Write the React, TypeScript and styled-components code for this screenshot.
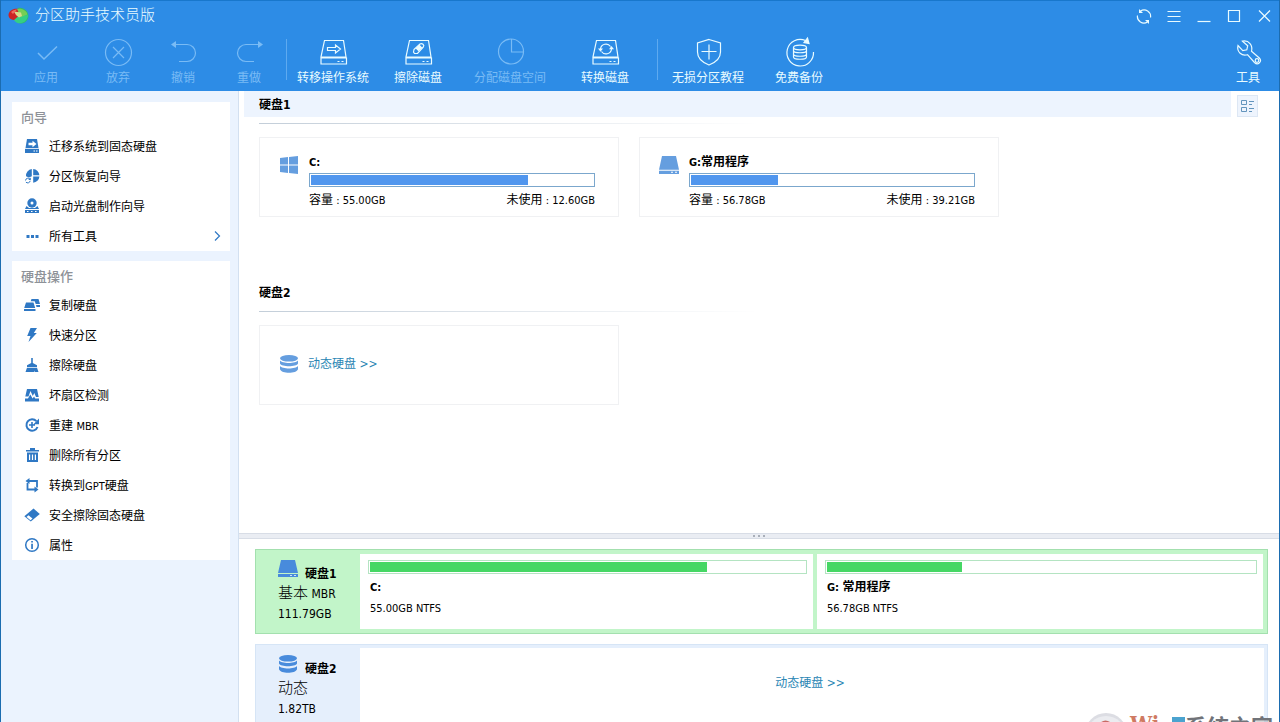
import React from "react";
import styled, { createGlobalStyle } from "styled-components";

const GlobalStyle = createGlobalStyle`
  *, *::before, *::after { box-sizing: border-box; }
  body {
    margin: 0;
    overflow: hidden;
    font-family: "DejaVu Sans Condensed", "Noto Sans CJK SC", sans-serif;
    font-size: 12px;
    line-height: 20px;
    color: #000;
    background: #fff;
  }
  button { font: inherit; color: inherit; background: none; border: 0; padding: 0; margin: 0; }
  a { text-decoration: none; }
  svg { display: block; flex: none; }
  h1, h2, h3, p, ul { margin: 0; padding: 0; font-size: inherit; }
`;

const Window = styled.div`
  position: relative;
  height: 100vh;
  display: flex;
  flex-direction: column;
  overflow: hidden;
  border: solid #1b6cb0;
  border-width: 0 1px;
`;

const Header = styled.header`
  flex: none;
  height: 91px;
  background: #2d8ce6;
  color: #e9fbff;
  border-top: 1px solid #1877cc;
`;

const TitleBar = styled.div`
  display: flex;
  align-items: center;
  height: 30px;
  padding-left: 7px;
`;

const AppTitle = styled.h1`
  flex: 1;
  margin-left: 6px;
  font-size: 15px;
  font-weight: 300;
  line-height: 18px;
  padding-bottom: 2px;
`;

const WindowButton = styled.button`
  display: flex;
  width: 30px;
  height: 30px;
  align-items: center;
  justify-content: center;
`;

const Toolbar = styled.nav`
  display: flex;
  height: 60px;
  padding-left: 9px;
`;

const ToolButton = styled.button<{ $width: number }>`
  display: flex;
  flex-direction: column;
  align-items: center;
  flex: none;
  width: ${(p) => p.$width}px;
  padding-top: 5px;
  white-space: nowrap;
  &:disabled { color: #79bbf5; }
`;

const Separator = styled.div<{ $gap?: number }>`
  width: 1px;
  height: 41px;
  margin-top: 8px;
  margin-left: ${(p) => p.$gap ?? 0}px;
  background: #5eaaf0;
`;

const Spacer = styled.div`
  flex: 1;
`;

const Body = styled.div`
  flex: 1;
  min-height: 0;
  display: flex;
`;

const Sidebar = styled.aside`
  flex: none;
  width: 238px;
  padding: 11px 8px 0 11px;
  display: flex;
  flex-direction: column;
  gap: 10px;
  background: #ebf3fe;
  border-right: 1px solid #d3e0f0;
`;

const MenuCard = styled.section`
  background: #fff;
`;

const MenuHeading = styled.h2`
  height: 29px;
  padding: 1px 0 0 9px;
  font-size: 13px;
  font-weight: 500;
  line-height: 29px;
  color: #8e9298;
`;

const MenuList = styled.ul`
  list-style: none;
`;

const MenuItem = styled.button`
  display: flex;
  align-items: center;
  width: 100%;
  height: 30px;
  padding: 0 8px 0 12px;
  text-align: left;
  svg { color: #2f78c4; }
`;

const MenuLabel = styled.span`
  flex: 1;
  margin-left: 9px;
  padding-top: 2px;
`;

const Latin = styled.span`
  font-size: 11px;
`;

const Main = styled.main`
  flex: 1;
  min-width: 0;
  display: flex;
  flex-direction: column;
`;

const VolumePane = styled.div`
  flex: 1;
  min-height: 0;
  display: flex;
  flex-direction: column;
  gap: 62px;
  overflow: hidden;
`;

const Group = styled.section`
  flex: none;
`;

const GroupTop = styled.div`
  display: flex;
  padding-left: 5px;
`;

const GroupTitle = styled.h2<{ $selected?: boolean }>`
  flex: 1;
  height: 26px;
  padding: 1px 0 0 15px;
  font-weight: bold;
  line-height: 26px;
  background: ${(p) => (p.$selected ? "#edf4fe" : "transparent")};
`;

const ViewButton = styled.button`
  display: flex;
  align-items: center;
  justify-content: center;
  width: 21px;
  height: 22px;
  margin: 4px 21px 0 6px;
  background: #eef4fd;
  border: 1px solid #dde7f4;
`;

const Rule = styled.div`
  height: 1px;
  margin: 6px 20px 13px;
  background: linear-gradient(90deg, #c3ced9, #fff 50%);
`;

const Cards = styled.div`
  display: flex;
  gap: 20px;
  padding: 0 20px;
`;

const VolumeCard = styled.article`
  display: flex;
  flex: 0 1 360px;
  height: 80px;
  padding: 14px 23px 0 19px;
  border: 1px solid #f0f1f3;
`;

const VolumeIcon = styled.div`
  width: 30px;
  padding-top: 4px;
`;

const VolumeInfo = styled.div`
  flex: 1;
`;

const VolumeName = styled.h3`
  font-weight: bold;
`;

const Meter = styled.div<{ $tone: "blue" | "green" }>`
  height: 14px;
  padding: 1px;
  background: #fff;
  border: 1px solid ${(p) => (p.$tone === "blue" ? "#7ba7cd" : "#b4e4c2")};
`;

const Fill = styled.div<{ $tone: "blue" | "green" }>`
  height: 100%;
  background: ${(p) => (p.$tone === "blue" ? "#5096ee" : "#45d764")};
`;

const Amounts = styled.div`
  display: flex;
  justify-content: space-between;
  padding-top: 3px;
`;

const DynamicLink = styled.a`
  color: #2a86b4;
`;

const DynamicCard = styled(VolumeCard)`
  align-items: center;
  gap: 9px;
  padding: 0 19px 3px;
`;

const Splitter = styled.div`
  display: flex;
  flex: none;
  align-items: center;
  justify-content: center;
  gap: 3px;
  height: 6px;
  background: #eaedf3;
  border: solid #d8dde6;
  border-width: 1px 0;
`;

const Dot = styled.i`
  width: 2px;
  height: 2px;
  background: #a9afb9;
`;

const DiskPane = styled.div`
  flex: none;
  display: flex;
  flex-direction: column;
  gap: 10px;
  height: 183px;
  padding: 10px 11px 0 16px;
  overflow: hidden;
`;

const DiskRow = styled.section<{ $selected?: boolean }>`
  display: flex;
  flex: none;
  height: 85px;
  border: 1px solid ${(p) => (p.$selected ? "#a3e0ae" : "#d6e5f6")};
  background: ${(p) => (p.$selected ? "#c2f5c9" : "#e5effc")};
`;

const DiskSummary = styled.div`
  width: 104px;
  padding: 13px 0 0 22px;
`;

const DiskTitle = styled.h3`
  display: flex;
  gap: 7px;
  height: 20px;
  font-weight: bold;
  line-height: 22px;
  svg { margin-top: -3px; }
`;

const Kind = styled.span`
  font-size: 15px;
  font-weight: 300;
`;

const Partitions = styled.div<{ $inset: number }>`
  flex: 1;
  display: flex;
  gap: 4px;
  padding: ${(p) => p.$inset}px ${(p) => p.$inset}px ${(p) => p.$inset}px 0;
`;

const Partition = styled.div<{ $share: number }>`
  flex: ${(p) => p.$share} 1 0;
  padding: 6px 6px 0 8px;
  background: #fff;
`;

const PartitionText = styled.div`
  padding: 3px 0 0 2px;
`;

const PartitionSize = styled.p`
  font-size: 11px;
  line-height: 22px;
`;

const DynamicPartition = styled.div`
  flex: 1;
  display: flex;
  align-items: center;
  justify-content: center;
  padding: 0 4px 8px 0;
  background: #fff;
`;

const Watermark = styled.div`
  position: absolute;
  right: 4px;
  bottom: 0;
  width: 190px;
  height: 10px;
  display: flex;
  align-items: flex-start;
  overflow: hidden;
  color: #707379;
`;

const WatermarkLetters = styled.span`
  width: 42px;
  margin-left: 3px;
  font: bold 22px/24px "DejaVu Serif Condensed", "DejaVu Serif", serif;
  color: #cf7a62;
`;

const WatermarkName = styled.span`
  font: bold 22px/26px "Noto Sans CJK SC", sans-serif;
`;

const Blue = styled.div`
  flex: none;
  width: 13px;
  height: 20px;
  margin-top: 5px;
  background: #4ba3cf;
`;

/* ---------- icons ---------- */

const Line = ({ children, size = 32 }: { children: React.ReactNode; size?: number }) => (
  <svg width={size} height={size} viewBox={`0 0 ${size} ${size}`} fill="none" stroke="currentColor" strokeWidth="1.2">
    {children}
  </svg>
);

const Drive = ({ children }: { children: React.ReactNode }) => (
  <Line>
    <path d="M7.500 4.500h19l2.500 16.500h-25zM4 22h25.500v6H4zM20.500 25.500h2M24.500 25.500h2" />
    {children}
  </Line>
);

const toolIcons: Record<string, React.ReactNode> = {
  apply: <Line><path d="M8 17l6 6L27 10.500" strokeWidth="1.500" /></Line>,
  discard: <Line><circle cx="16.500" cy="16.500" r="13" /><path d="M11 11l11 11M22 11l-11 11" /></Line>,
  undo: <Line><path d="M7 8.500h13a8.500 8.500 0 0 1 0 17h-8" /><path d="M4 8.500l5-3.500v7z" fill="currentColor" stroke="none" /></Line>,
  redo: <Line><path d="M26 8.500H13a8.500 8.500 0 0 0 0 17h8" /><path d="M30 8.500l-5-3.500v7z" fill="currentColor" stroke="none" /></Line>,
  migrate: <Drive><path d="M10.500 11.500h8V9l5 4-5 4v-2.500h-8z" /></Drive>,
  wipe: (
    <Drive>
      <path d="M12 13.500l6-5.500q1.500-1 3 .2 1.500 1.300.3 2.800L15.500 17.500h-3L11.500 16z" />
      <path d="M14.500 12.500l3-2.800 2 2-3 2.800z" fill="currentColor" />
    </Drive>
  ),
  allocate: <Line><circle cx="17" cy="15.500" r="12.500" /><path d="M17.500 3v13H29.500" /></Line>,
  convert: (
    <Drive>
      <path d="M11.500 13a5.500 5.500 0 0 1 10-2.500M22.500 13a5.500 5.500 0 0 1-10 2.500" />
      <path d="M9 12.500h5l-2.500 3.200zM20 13.300h5l-2.500-3.200z" fill="currentColor" stroke="none" />
    </Drive>
  ),
  shield: <Line><path d="M17 3.500l11.500 3.500v9c0 6-5 10.500-11.500 13C10.500 26.500 5.500 22 5.500 16V7zM9.500 15.500h15M17 8.500v15" /></Line>,
  backup: (
    <Line>
      <path d="M22.500 4.500A13.300 13.300 0 1 0 30.500 16" />
      <path d="M21 6.500l3.500-4.500 1.500 5.500z" fill="currentColor" />
      <ellipse cx="17" cy="11.500" rx="6.500" ry="2.300" />
      <path d="M10.500 11.500V21c0 3 13 3 13 0v-9.500M10.500 14.500c0 3 13 3 13 0M10.500 18c0 3 13 3 13 0" />
    </Line>
  ),
  wrench: (
    <Line>
      <path d="M10.500 5.200l5.200 4.600-.9 4-4 .9L6 9.500c-1.500 6.500 4 11 9.500 9.200l7 7.800c3.500 3.500 8-1.200 4.800-4.500l-7.800-6.700c1.500-5.500-2.500-11.500-9-10.100z" />
      <circle cx="25" cy="24.500" r="1.800" />
    </Line>
  ),
};

const Solid = ({ children }: { children: React.ReactNode }) => (
  <svg width="16" height="16" viewBox="0 0 16 16" fill="currentColor">{children}</svg>
);

const menuIcons: Record<string, React.ReactNode> = {
  migrate: <Solid><path d="M3 1h10l1.500 9h-13z" /><path d="M1 10.800h14V15H1z" /><path d="M4.500 4.700h4V2.800L12.500 6l-4 3.200V7.300h-4zM9.500 12.500h1.500v1H9.500zM12 12.500h1.500v1H12z" fill="#fff" /></Solid>,
  recover: <Solid><path d="M7.800 1v7.200L5 9.600 2 8.200A6.700 6.700 0 0 1 7.800 1zM9.200 1a6.700 6.700 0 0 1 6.200 6.200H9.200zM9.200 8.600h6.200a6.700 6.700 0 0 1-6.200 6.200z" /><path d="M1.500 12.500a2.500 2.500 0 0 1 4.500-1.300M6.200 12.800a2.500 2.500 0 0 1-4.300 1.300" fill="none" stroke="currentColor" /><path d="M6.800 9.500v2.600H4.200z" /></Solid>,
  disc: <Solid><circle cx="8" cy="5" r="4.700" /><circle cx="8" cy="5" r="1.500" fill="#fff" /><path d="M2.500 8L1 11h14l-1.500-3-2.500 2H5zM1 12h14v3H1z" /><path d="M3 13h1.500v1H3zM7 13h1.500v1H7zM11 13h1.500v1H11z" fill="#fff" /></Solid>,
  all: <Solid><path d="M2.500 7h3v3h-3zM7 7h3v3H7zM11.500 7h3v3h-3z" /></Solid>,
  copy: <Solid><path d="M7.500 2h7l1.500 5h-4.300l-1-2.800H6.700zM12 8h4v2h-3.500zM2 5.500h7.500L11.200 11H.2zM0 12h11.500v2H0z" /></Solid>,
  quick: <Solid><path d="M6.500 1H13L9.800 6h3L4.500 15l2-6H3.200z" /></Solid>,
  wipe: <Solid><path d="M7.200 1h1.600v5l4.200 2.300v1.700H3V8.300l4.200-2.300zM3 10.800h10l1.500 4.200H11l-.7-1.500v1.500H1.500z" /></Solid>,
  surface: <Solid><path d="M3 2h10l1.700 8H12l-1.700-4-1.500 3-2.300-5-2 5.500H1.300zM1 11.500h3l2.300-4 2.300 4 1.500-2 1 2H15v3H1z" /></Solid>,
  rebuild: <Solid><path d="M12.400 4.200A5.700 5.700 0 1 0 13.500 10" fill="none" stroke="currentColor" strokeWidth="2" /><path d="M15 1.500v5.800H9.500zM7.200 5h1.600v2.200H11v1.600H8.800V11H7.200V8.800H5V7.200h2.200z" /></Solid>,
  trash: <Solid><path d="M6 1h5v2h4v1.500H2V3h4zM3 5.500h11V15H3zM5 7.500v5.500h1.200V7.500zm2.900 0v5.500h1.200V7.500zm2.900 0v5.500H12V7.500z" fillRule="evenodd" /></Solid>,
  convert: <Solid><path d="M5 4h8v6.500M11 12.500H3.500V6" fill="none" stroke="currentColor" strokeWidth="1.800" /><path d="M5.500 1v6L1.500 4zM10.500 9.500v6l4-3z" /></Solid>,
  erase: <Solid><path d="M9.500 1.500l6.300 5.500-9 7.500L.300 9.300z" /><path d="M4.500 8.300l4 3.300-2 1.600-4-3.300z" fill="#fff" /></Solid>,
  info: <Solid><circle cx="8" cy="8" r="6.300" fill="none" stroke="currentColor" strokeWidth="1.500" /><path d="M7.200 4h1.700v1.600H7.200zM7.200 6.700h1.700V12H7.200z" /></Solid>,
};

const DriveGlyph = ({ color, height = 18 }: { color: string; height?: number }) => (
  <svg width="20" height={height} viewBox="0 0 20 18" preserveAspectRatio="none" fill={color}>
    <path d="M3 0h14l3 13.800H0zM0 14.800h20V18H0z" />
    <path d="M12 15.800h2v1h-2zM16 15.800h2v1h-2z" fill="#fff" />
  </svg>
);

const StackGlyph = ({ color }: { color: string }) => (
  <svg width="20" height="18" viewBox="0 0 20 18" fill={color}>
    <ellipse cx="10" cy="3.300" rx="9" ry="3.300" />
    <path d="M1 5.500c2 3.300 16 3.300 18 0v3c-1.500 3.600-16.500 3.600-18 0zM1 11c2 3.300 16 3.300 18 0v3.200c-1.500 4.800-16.500 4.800-18 0z" />
  </svg>
);

const WindowsGlyph = () => (
  <svg width="20" height="18" viewBox="0 0 20 18" fill="#659edf">
    <path d="M1 2l8-1v7.500H1zM10 .9L19 0v8.500h-9zM1 9.500h8V17l-8-1zM10 9.500h9V18l-9-.9z" />
  </svg>
);

const Logo = () => (
  <svg width="21" height="18" viewBox="0 0 21 18">
    <path d="M10 1c6-1 10 3 10.500 8-.500 5-4.500 8-9 7.500L9 9z" fill="#2fbb6b" />
    <path d="M.500 8C1 3.500 5 1 11 2L10 8l1 2-3.500 3C3 13 .500 11 .500 8z" fill="#cc2225" />
    <path d="M6 13l4.500-4 9.500-1c0 4-3.500 8.500-9 8.300C9 16 7 14.800 6 13z" fill="#35cf83" />
    <path d="M9 2c5-1.300 9.500 1.500 10.500 5.500L13 10z" fill="#76ce55" />
    <path d="M6 4.500l7 1 1 3.500-3 1.500L8 8z" fill="#d9d98a" />
    <path d="M3 5q3-3 6-2.500L5 7z" fill="#ee6a61" />
  </svg>
);

/* ---------- data ---------- */

type Tool = { icon: string; label: string; width: number; disabled?: boolean };

const historyTools: Tool[] = [
  { icon: "apply", label: "应用", width: 72, disabled: true },
  { icon: "discard", label: "放弃", width: 72, disabled: true },
  { icon: "undo", label: "撤销", width: 58, disabled: true },
  { icon: "redo", label: "重做", width: 74, disabled: true },
];

const diskTools: Tool[] = [
  { icon: "migrate", label: "转移操作系统", width: 92 },
  { icon: "wipe", label: "擦除磁盘", width: 78 },
  { icon: "allocate", label: "分配磁盘空间", width: 106, disabled: true },
  { icon: "convert", label: "转换磁盘", width: 84 },
];

const helpTools: Tool[] = [
  { icon: "shield", label: "无损分区教程", width: 100 },
  { icon: "backup", label: "免费备份", width: 82 },
];

const wizardItems = [
  { icon: "migrate", label: "迁移系统到固态硬盘" },
  { icon: "recover", label: "分区恢复向导" },
  { icon: "disc", label: "启动光盘制作向导" },
  { icon: "all", label: "所有工具", more: true },
];

const diskItems: { icon: string; label: React.ReactNode }[] = [
  { icon: "copy", label: "复制硬盘" },
  { icon: "quick", label: "快速分区" },
  { icon: "wipe", label: "擦除硬盘" },
  { icon: "surface", label: "坏扇区检测" },
  { icon: "rebuild", label: <>重建 <Latin>MBR</Latin></> },
  { icon: "trash", label: "删除所有分区" },
  { icon: "convert", label: <>转换到<Latin>GPT</Latin>硬盘</> },
  { icon: "erase", label: "安全擦除固态硬盘" },
  { icon: "info", label: "属性" },
];

const Tools = ({ items }: { items: Tool[] }) => (
  <>
    {items.map((t) => (
      <ToolButton key={t.label} $width={t.width} disabled={t.disabled}>
        {toolIcons[t.icon]}
        {t.label}
      </ToolButton>
    ))}
  </>
);

const Menu = ({ title, items }: { title: string; items: { icon: string; label: React.ReactNode; more?: boolean }[] }) => (
  <MenuCard>
    <MenuHeading>{title}</MenuHeading>
    <MenuList>
      {items.map((item) => (
        <li key={item.icon}>
          <MenuItem>
            {menuIcons[item.icon]}
            <MenuLabel>{item.label}</MenuLabel>
            {item.more && (
              <svg width="10" height="12" viewBox="0 0 10 12" fill="none" stroke="currentColor" strokeWidth="1.200">
                <path d="M3 1.500L7.500 6 3 10.500" />
              </svg>
            )}
          </MenuItem>
        </li>
      ))}
    </MenuList>
  </MenuCard>
);

const Volume = ({ icon, name, total, free, used }: { icon: React.ReactNode; name: React.ReactNode; total: string; free: string; used: number }) => (
  <VolumeCard>
    <VolumeIcon>{icon}</VolumeIcon>
    <VolumeInfo>
      <VolumeName>{name}</VolumeName>
      <Meter $tone="blue">
        <Fill $tone="blue" style={{ width: `${used}%` }} />
      </Meter>
      <Amounts>
        <span>容量<Latin> : {total}</Latin></span>
        <span>未使用<Latin> : {free}</Latin></span>
      </Amounts>
    </VolumeInfo>
  </VolumeCard>
);

export default function App() {
  return (
    <Window>
      <GlobalStyle />
      <Header>
        <TitleBar>
          <Logo />
          <AppTitle>分区助手技术员版</AppTitle>
          <WindowButton aria-label="刷新">
            <Line size={16}>
              <path d="M4.500 3A6.500 6.500 0 0 1 14.500 9.500M11.500 14A6.500 6.500 0 0 1 1.500 7.500" />
              <path d="M3 1v4h4zM13 16v-4H9z" fill="currentColor" stroke="none" />
            </Line>
          </WindowButton>
          <WindowButton aria-label="菜单"><Line size={16}><path d="M1.500 3.500h13M1.500 8.500h13M1.500 13.500h13" /></Line></WindowButton>
          <WindowButton aria-label="最小化"><Line size={16}><path d="M1.500 13.500h13" /></Line></WindowButton>
          <WindowButton aria-label="最大化"><Line size={16}><path d="M2.500 2.500h11v11h-11z" /></Line></WindowButton>
          <WindowButton aria-label="关闭"><Line size={16}><path d="M3 2.500l11 11M14 2.500l-11 11" /></Line></WindowButton>
        </TitleBar>
        <Toolbar>
          <Tools items={historyTools} />
          <Separator />
          <Tools items={diskTools} />
          <Separator $gap={10} />
          <Tools items={helpTools} />
          <Spacer />
          <Tools items={[{ icon: "wrench", label: "工具", width: 62 }]} />
        </Toolbar>
      </Header>
      <Body>
        <Sidebar>
          <Menu title="向导" items={wizardItems} />
          <Menu title="硬盘操作" items={diskItems} />
        </Sidebar>
        <Main>
          <VolumePane>
            <Group>
              <GroupTop>
                <GroupTitle $selected>硬盘1</GroupTitle>
                <ViewButton aria-label="切换视图">
                  <svg width="15" height="16" viewBox="0 0 15 16" fill="none" stroke="#6395bd">
                    <path d="M1.500 2.500h5v4h-5zM1.500 9.500h5v4h-5zM9 3.500h5M9 6.500h3M9 10.500h5M9 13.500h3" />
                  </svg>
                </ViewButton>
              </GroupTop>
              <Rule />
              <Cards>
                <Volume icon={<WindowsGlyph />} name={<Latin>C:</Latin>} total="55.00GB" free="12.60GB" used={77} />
                <Volume icon={<DriveGlyph color="#659edf" />} name={<><Latin>G:</Latin>常用程序</>} total="56.78GB" free="39.21GB" used={31} />
              </Cards>
            </Group>
            <Group>
              <GroupTop>
                <GroupTitle>硬盘2</GroupTitle>
              </GroupTop>
              <Rule />
              <Cards>
                <DynamicCard>
                  <StackGlyph color="#659edf" />
                  <DynamicLink href="#disk2">动态硬盘 &gt;&gt;</DynamicLink>
                </DynamicCard>
              </Cards>
            </Group>
          </VolumePane>
          <Splitter><Dot /><Dot /><Dot /></Splitter>
          <DiskPane>
            <DiskRow $selected>
              <DiskSummary>
                <DiskTitle><DriveGlyph color="#488bdc" height={17} />硬盘1</DiskTitle>
                <p><Kind>基本</Kind> MBR</p>
                <p>111.79GB</p>
              </DiskSummary>
              <Partitions $inset={4}>
                <Partition $share={453}>
                  <Meter $tone="green"><Fill $tone="green" style={{ width: "77.5%" }} /></Meter>
                  <PartitionText>
                    <VolumeName><Latin>C:</Latin></VolumeName>
                    <PartitionSize>55.00GB NTFS</PartitionSize>
                  </PartitionText>
                </Partition>
                <Partition $share={446}>
                  <Meter $tone="green"><Fill $tone="green" style={{ width: "31.5%" }} /></Meter>
                  <PartitionText>
                    <VolumeName><Latin>G: </Latin>常用程序</VolumeName>
                    <PartitionSize>56.78GB NTFS</PartitionSize>
                  </PartitionText>
                </Partition>
              </Partitions>
            </DiskRow>
            <DiskRow>
              <DiskSummary>
                <DiskTitle><StackGlyph color="#488bdc" />硬盘2</DiskTitle>
                <p><Kind>动态</Kind></p>
                <p>1.82TB</p>
              </DiskSummary>
              <Partitions $inset={3}>
                <DynamicPartition>
                  <DynamicLink href="#disk2">动态硬盘 &gt;&gt;</DynamicLink>
                </DynamicPartition>
              </Partitions>
            </DiskRow>
          </DiskPane>
        </Main>
      </Body>
      <Watermark>
        <svg width="42" height="42" viewBox="0 0 42 42">
          <circle cx="21" cy="22" r="21" fill="#dcdde3" />
          <circle cx="21" cy="24" r="20" fill="#ebecf0" />
          <path d="M11 16q9-15 20 0z" fill="#c86a65" />
        </svg>
        <WatermarkLetters>Wi</WatermarkLetters>
        <Blue />
        <WatermarkName>系统之家</WatermarkName>
      </Watermark>
    </Window>
  );
}
